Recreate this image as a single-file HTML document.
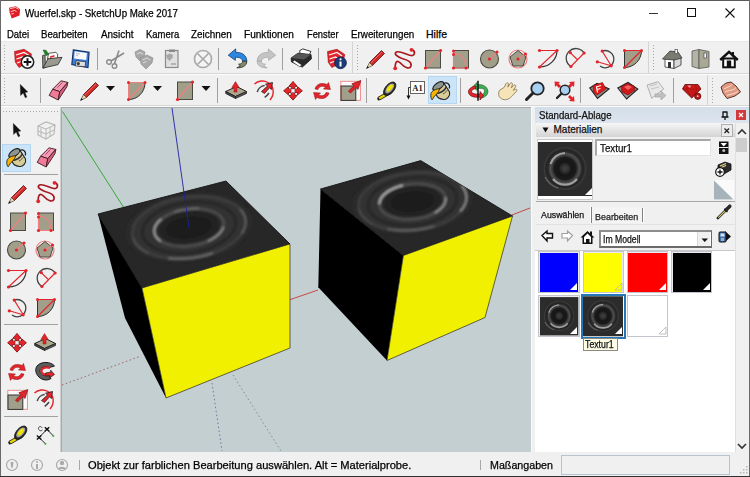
<!DOCTYPE html>
<html><head><meta charset="utf-8">
<style>
*{box-sizing:border-box;margin:0;padding:0}
html,body{width:750px;height:477px;overflow:hidden;background:#f0f0f0;font-family:"Liberation Sans",sans-serif;color:#000}
.a{position:absolute}
.t{position:absolute;white-space:nowrap;line-height:1;-webkit-text-stroke:0.25px currentColor}
svg{position:absolute;overflow:visible}
</style></head><body>
<div class="a" style="left:0;top:0;width:750px;height:25px;background:#fff"></div>
<div class="a" style="left:0;top:25px;width:750px;height:16px;background:#fff"></div>
<div class="a" style="left:0;top:41px;width:750px;height:1px;background:#e8e8e8"></div>
<div class="a" style="left:0;top:73px;width:750px;height:1px;background:#d6d6d6"></div>
<div class="a" style="left:0;top:74px;width:750px;height:1px;background:#fcfcfc"></div>
<div class="a" style="left:0;top:105px;width:750px;height:1px;background:#d6d6d6"></div>
<div class="a" style="left:0;top:106px;width:750px;height:1px;background:#fcfcfc"></div>
<!-- title -->
<svg width="12" height="13" style="left:9px;top:6px" viewBox="0 0 20 21"><path d="M0,2.5 L11.5,0 L18.5,5 L17.5,15.5 L4.5,20.5 L1,10 Z" fill="#e01c24"/><path d="M2,4 L11,2 L16,5 M3,9 L9.5,7 L12.5,9 M4,13 L8,12" stroke="#fbd0d0" stroke-width="1.6" fill="none"/></svg>
<div class="t" style="left:25px;top:8px;font-size:10.5px;color:#000;transform-origin:0 0;transform:scaleX(0.927)">Wuerfel.skp - SketchUp Make 2017</div>
<div class="a" style="left:649px;top:12.5px;width:9px;height:1.6px;background:#333"></div>
<div class="a" style="left:687px;top:8px;width:9px;height:9px;border:1px solid #111"></div>
<svg width="10" height="10" style="left:725px;top:8px"><path d="M0.5,0.5 L9.5,9.5 M9.5,0.5 L0.5,9.5" stroke="#111" stroke-width="1.1"/></svg>
<!-- menu -->
<div class="t" style="left:7px;top:29px;font-size:10.5px;color:#000;transform-origin:0 0;transform:scaleX(0.901)">Datei</div><div class="t" style="left:41px;top:29px;font-size:10.5px;color:#000;transform-origin:0 0;transform:scaleX(0.919)">Bearbeiten</div><div class="t" style="left:100.5px;top:29px;font-size:10.5px;color:#000;transform-origin:0 0;transform:scaleX(0.944)">Ansicht</div><div class="t" style="left:146px;top:29px;font-size:10.5px;color:#000;transform-origin:0 0;transform:scaleX(0.903)">Kamera</div><div class="t" style="left:191px;top:29px;font-size:10.5px;color:#000;transform-origin:0 0;transform:scaleX(0.942)">Zeichnen</div><div class="t" style="left:244.3px;top:29px;font-size:10.5px;color:#000;transform-origin:0 0;transform:scaleX(0.96)">Funktionen</div><div class="t" style="left:306.5px;top:29px;font-size:10.5px;color:#000;transform-origin:0 0;transform:scaleX(0.887)">Fenster</div><div class="t" style="left:350.5px;top:29px;font-size:10.5px;color:#000;transform-origin:0 0;transform:scaleX(0.935)">Erweiterungen</div><div class="t" style="left:426px;top:29px;font-size:10.5px;color:#000;transform-origin:0 0;transform:scaleX(1.0)">Hilfe</div>
<!-- selected paint bg -->
<div class="a" style="left:428px;top:76px;width:29px;height:28px;background:#cce4f7;border:1px solid #b4d8f4"></div>
<div class="a" style="left:2px;top:144px;width:29px;height:28px;background:#cce4f7;border:1px solid #b4d8f4"></div>
<div class="a" style="left:97px;top:48px;width:1px;height:22px;background:#a0a0a0"></div><div class="a" style="left:218px;top:48px;width:1px;height:22px;background:#a0a0a0"></div><div class="a" style="left:282px;top:48px;width:1px;height:22px;background:#a0a0a0"></div><div class="a" style="left:318px;top:48px;width:1px;height:22px;background:#a0a0a0"></div><div class="a" style="left:352px;top:42px;width:1px;height:31px;background:#d4d4d4"></div><div class="a" style="left:357px;top:45px;width:1px;height:27px;background:repeating-linear-gradient(#a8a8a8 0 1px,transparent 1px 3px)"></div><div class="a" style="left:648px;top:42px;width:1px;height:31px;background:#d4d4d4"></div><div class="a" style="left:653px;top:45px;width:1px;height:27px;background:repeating-linear-gradient(#a8a8a8 0 1px,transparent 1px 3px)"></div><div class="a" style="left:40px;top:78px;width:1px;height:25px;background:#a0a0a0"></div><div class="a" style="left:217px;top:78px;width:1px;height:25px;background:#a0a0a0"></div><div class="a" style="left:366px;top:78px;width:1px;height:25px;background:#a0a0a0"></div><div class="a" style="left:460px;top:78px;width:1px;height:25px;background:#a0a0a0"></div><div class="a" style="left:580px;top:78px;width:1px;height:25px;background:#a0a0a0"></div><div class="a" style="left:673px;top:78px;width:1px;height:25px;background:#a0a0a0"></div><div class="a" style="left:707px;top:75px;width:1px;height:30px;background:#d4d4d4"></div><div class="a" style="left:712px;top:78px;width:1px;height:26px;background:repeating-linear-gradient(#a8a8a8 0 1px,transparent 1px 3px)"></div><div class="a" style="left:4px;top:45px;width:1px;height:27px;background:repeating-linear-gradient(#a8a8a8 0 1px,transparent 1px 3px)"></div><div class="a" style="left:4px;top:78px;width:1px;height:26px;background:repeating-linear-gradient(#a8a8a8 0 1px,transparent 1px 3px)"></div><div class="a" style="left:4px;top:174px;width:54px;height:1px;background:#a0a0a0"></div><div class="a" style="left:4px;top:324px;width:54px;height:1px;background:#a0a0a0"></div><div class="a" style="left:4px;top:416px;width:54px;height:1px;background:#a0a0a0"></div><div class="a" style="left:3px;top:111px;width:56px;height:1px;background:repeating-linear-gradient(90deg,#a8a8a8 0 1px,transparent 1px 3px)"></div>
<svg width="750" height="477" style="left:0;top:0"><g transform="translate(14,49) scale(1.0)"><path d="M0.5,2.5 L10,0.3 L17.5,5 L16,12 L5,18.5 L1.3,13 Z" fill="#e3242b" stroke="#901010" stroke-width="0.6"/>
<path d="M2,6 L10,3.5 L15,6.5 M2.5,10 L8.5,8 L12,10 M3,14 L7,12.5" stroke="#fff" stroke-width="1.3" fill="none"/>
<circle cx="13.5" cy="13" r="6.2" fill="#fff" stroke="#222" stroke-width="1.5"/>
<path d="M13.5,9.2 V16.8 M9.7,13 H17.3" stroke="#111" stroke-width="2"/></g><g transform="translate(42,49) scale(1.0)"><path d="M0.5,6.5 L3,6 L3.5,18.5 L0.8,19.2 Z" fill="#8c8c84" stroke="#333" stroke-width="0.8"/>
<path d="M5.5,10 L6.5,4.3 L13.8,3.3 L15.6,5 L15.6,9.5 Z" fill="#fff" stroke="#333" stroke-width="0.8"/>
<path d="M8,8.3 L12.5,6.8" stroke="#e3242b" stroke-width="1.6"/>
<path d="M1.2,1 L4.2,1.5 L6.5,5.4 L3.8,6.6 Z" fill="#1a8a28" stroke="#0a4a14" stroke-width="0.6"/>
<path d="M1,19 L6,9.8 L20,8.3 L16,15.6 Z" fill="#9a9a90" stroke="#333" stroke-width="0.9"/></g><g transform="translate(71,49) scale(1.0)"><path d="M2.3,0.9 L18.1,3.3 L17,18.5 L0.8,15.6 Z" fill="#3a80d8" stroke="#10306a" stroke-width="1.1"/>
<path d="M3.7,2.2 L16,4.1 L15.2,10.9 L3.1,9.6 Z" fill="#fafafa"/>
<path d="M5,4.5 L9,5 M5,6.5 L7,6.8" stroke="#889" stroke-width="0.6"/>
<path d="M5.2,11.7 L14.7,12.7 L14.1,17.7 L4.2,16.9 Z" fill="#e0e0e0" stroke="#223" stroke-width="0.7"/>
<circle cx="7.3" cy="14.6" r="1.6" fill="#3a3a30"/></g><g transform="translate(106,49) scale(1.0)"><circle cx="3" cy="13" r="2.3" fill="none" stroke="#8a8a8a" stroke-width="1.4"/>
<circle cx="8.5" cy="17" r="2.3" fill="none" stroke="#8a8a8a" stroke-width="1.4"/>
<path d="M5,12 L18,4 M8.5,14.5 L13,1.5" stroke="#8a8a8a" stroke-width="1.6"/></g><g transform="translate(134,49) scale(1.0)"><path d="M1,3 L6,0.5 L11,3 L10,8 L6,12 L2,8 Z" fill="#a8a8a8" stroke="#8a8a8a" stroke-width="0.6"/>
<path d="M6,9 L13,6 L19,9 L18,14 L12,20 L7,15 Z" fill="#a8a8a8" stroke="#8a8a8a" stroke-width="0.6"/>
<path d="M3,5 L6,3.5 L9,5 M8.5,11 L13,9 L16,11 M9,14 L12.5,12.5" stroke="#ddd" stroke-width="1" fill="none"/></g><g transform="translate(162,49) scale(1.0)"><rect x="3.5" y="1.5" width="12.5" height="17" fill="#e0e0e0" stroke="#8a8a8a" stroke-width="1.2"/>
<rect x="7" y="0.5" width="6" height="2.5" fill="#8a8a8a"/>
<path d="M4,6 L8,4.5 L11,6 L10.5,9 L7.5,12 L5,9.5 Z" fill="#a8a8a8"/>
<path d="M9,15 H14" stroke="#8a8a8a" stroke-width="1"/></g><g transform="translate(193,49) scale(1.0)"><circle cx="10" cy="10" r="8.5" fill="#f4f4f4" stroke="#a8a8a8" stroke-width="1.6"/>
<path d="M4.5,4.5 L15.5,15.5 M15.5,4.5 L4.5,15.5" stroke="#a8a8a8" stroke-width="1.6"/></g><g transform="translate(228,49) scale(1.0)"><path d="M7.7,-0.1 L0.3,6.2 L7.3,11.3 L7.5,8.3 C11,8 14.3,9.3 14.6,12.2 L18.8,12.2 C18.6,6 14,3.3 7.8,3.4 Z" fill="#2a88e0" stroke="#103a70" stroke-width="0.8"/>
<path d="M14.6,12.2 C14.6,14.2 13,15.2 10.5,15.2 L12.5,17 L8.8,18.8 C13,19.2 18.9,17.5 18.8,12.2 Z" fill="#808a70" stroke="#2a3020" stroke-width="0.8"/></g><g transform="translate(256,49) scale(1.0)"><g transform="translate(20,0) scale(-1,1)"><path d="M7.7,-0.1 L0.3,6.2 L7.3,11.3 L7.5,8.3 C11,8 14.3,9.3 14.6,12.2 L18.8,12.2 C18.6,6 14,3.3 7.8,3.4 Z" fill="#c4c4c4" stroke="#a8a8a8" stroke-width="0.8"/>
<path d="M14.6,12.2 C14.6,14.2 13,15.2 10.5,15.2 L12.5,17 L8.8,18.8 C13,19.2 18.9,17.5 18.8,12.2 Z" fill="#c8c8c8" stroke="#a8a8a8" stroke-width="0.8"/></g></g><g transform="translate(291,49) scale(1.0)"><path d="M8.7,1.6 L11.8,-0.1 L20,2.5 L17.4,7.3 L9,5 Z" fill="#fff" stroke="#222" stroke-width="0.9"/>
<path d="M0.1,9 L7,4.2 L20,5.5 L20.4,9.9 L11.3,18.1 L0.5,12.9 Z" fill="#2a2a2a" stroke="#111" stroke-width="0.8"/>
<path d="M7,4.2 L20,5.5 L13,10.5 L0.1,9 Z" fill="#555"/>
<path d="M1.4,12.9 L3.5,11.2 L10.9,16 L8.7,17.7 Z" fill="#fff" stroke="#222" stroke-width="0.6"/></g><g transform="translate(326,49) scale(1.0)"><path d="M1.5,2.5 L11,0.3 L18.8,5.5 L17,13 L5.8,18.5 L2.3,13.3 Z" fill="#e3242b" stroke="#901010" stroke-width="0.6"/>
<path d="M3,6 L11,3.5 L16,7 M3.5,10 L9.5,8 L13,10.5 M4,14 L8,12.5" stroke="#fff" stroke-width="1.3" fill="none"/>
<circle cx="14.5" cy="13.8" r="5.9" fill="#1a3a78" stroke="#0d2250" stroke-width="0.8"/>
<rect x="13.5" y="12.5" width="2" height="5" fill="#fff"/><circle cx="14.5" cy="10.3" r="1.1" fill="#fff"/></g><g transform="translate(366,49) scale(1.0)"><path d="M3.5,13.5 L15.5,1.5 L18.5,4.5 L6.5,16.5 Z" fill="#d02a2a" stroke="#5a1010" stroke-width="0.8"/>
<path d="M3.5,13.5 L6.5,16.5 L0.5,19.5 Z" fill="#e8d8b0" stroke="#333" stroke-width="0.6"/>
<path d="M0.5,19.5 L1.5,17 L3,18.5 Z" fill="#111"/>
<path d="M5,14 L16,3" stroke="#f07070" stroke-width="0.8"/></g><g transform="translate(393,49) scale(1.0)"><path d="M18.5,0.5 C23,2 22,7 18,6.5 C14,6 7,1.5 3.5,3 C0,5 5,8 9,9.5 C14,11 19,12.5 18,17 C17,20.5 12,19 9,15.5 C7,13 4,11 2.8,14 C2,16 2.2,18 2.2,19.3" fill="none" stroke="#a81820" stroke-width="1.7"/>
<circle cx="18.5" cy="0.8" r="1.9" fill="#e3242b"/><circle cx="2.2" cy="19.3" r="1.9" fill="#e3242b"/></g><g transform="translate(424,49.5) scale(1.0)"><rect x="1.5" y="1" width="15" height="17.5" fill="#a19e8a" stroke="#4a4a42" stroke-width="1"/>
<path d="M1.5,18.5 L16.5,1" stroke="#f08080" stroke-width="1.2"/><circle cx="1.5" cy="18.5" r="1.6" fill="#e3242b"/><circle cx="16.5" cy="1" r="1.6" fill="#e3242b"/></g><g transform="translate(452,49.5) scale(1.0)"><rect x="1.5" y="1" width="15" height="17.5" fill="#a19e8a" stroke="#4a4a42" stroke-width="1"/>
<path d="M1.5,4 C9,4 14,10 14,18.5" fill="none" stroke="#f08080" stroke-width="1.2"/>
<path d="M1.5,1 V18.5 H16" fill="none" stroke="#f08080" stroke-width="1.2"/>
<circle cx="1.5" cy="1.5" r="1.5" fill="#e3242b"/><circle cx="1.5" cy="5" r="1.5" fill="#e3242b"/><circle cx="1.5" cy="18.5" r="1.6" fill="#e3242b"/><circle cx="14" cy="18.5" r="1.5" fill="#e3242b"/></g><g transform="translate(480,49) scale(1.0)"><circle cx="9.5" cy="10" r="9" fill="#a19e8a" stroke="#4a4a42" stroke-width="1.1"/>
<path d="M9.5,10 L17,3" stroke="#f08080" stroke-width="1.2"/><circle cx="9.5" cy="10" r="1.6" fill="#e3242b"/><circle cx="17" cy="3" r="1.6" fill="#e3242b"/></g><g transform="translate(508,49) scale(1.0)"><circle cx="10" cy="10" r="9" fill="none" stroke="#f08080" stroke-width="1.2"/>
<path d="M10,1.5 L18,8 L15,17 L5,17 L2,8 Z" fill="#a19e8a" stroke="#4a4a42" stroke-width="1"/>
<path d="M10,10 L17.5,5" stroke="#f08080" stroke-width="1.2"/><circle cx="10" cy="10" r="1.6" fill="#e3242b"/><circle cx="17.5" cy="5" r="1.6" fill="#e3242b"/></g><g transform="translate(538,49) scale(1.0)"><path d="M19,1.5 C19,10 12,18 1.5,18" fill="none" stroke="#333" stroke-width="1.2"/>
<path d="M1.5,1.5 H19 M1.5,18 L19,1.5" stroke="#e3242b" stroke-width="1.1"/>
<circle cx="1.5" cy="1.5" r="1.6" fill="#e3242b"/><circle cx="19" cy="1.5" r="1.6" fill="#e3242b"/><circle cx="1.5" cy="18" r="1.6" fill="#e3242b"/></g><g transform="translate(566,49) scale(1.0)"><path d="M18.1,4 A9.7,9.7 0 1 0 4.9,17.5" fill="none" stroke="#444" stroke-width="1.3"/>
<path d="M18.1,4 L4.9,17.5 M4.2,3.6 L11.5,10.75" stroke="#e3242b" stroke-width="1.1"/>
<circle cx="4.2" cy="3.6" r="1.6" fill="#e3242b"/><circle cx="18.1" cy="4" r="1.6" fill="#e3242b"/><circle cx="4.9" cy="17.5" r="1.6" fill="#e3242b"/></g><g transform="translate(596,49) scale(1.0)"><path d="M6.2,2.1 A8.6,8.6 0 1 1 4,17" fill="none" stroke="#444" stroke-width="1.3"/>
<path d="M6.2,2.1 L15.2,16.8 M1.3,12.8 L15.2,16.8" stroke="#e3242b" stroke-width="1.1"/>
<circle cx="6.2" cy="2.1" r="1.6" fill="#e3242b"/><circle cx="1.3" cy="12.8" r="1.6" fill="#e3242b"/><circle cx="15.2" cy="16.8" r="1.6" fill="#e3242b"/></g><g transform="translate(623,49) scale(1.0)"><path d="M1.5,18.5 L1.5,1.5 L18.5,1.5 C18.5,11 11,18.5 1.5,18.5 Z" fill="#a19e8a" stroke="#333" stroke-width="1"/>
<path d="M1.5,1.5 H18.5 M1.5,18.5 L18.5,1.5" stroke="#e3242b" stroke-width="1.1"/>
<circle cx="1.5" cy="1.5" r="1.5" fill="#e3242b"/><circle cx="18.5" cy="1.5" r="1.5" fill="#e3242b"/><circle cx="1.5" cy="18.5" r="1.5" fill="#e3242b"/></g><g transform="translate(662,49) scale(1.0)"><path d="M3,9 L3,18 L12,19.5 L12,10 Z" fill="#fff" stroke="#333" stroke-width="0.8"/>
<path d="M12,10 L12,19.5 L19,16 L19,8 Z" fill="#d8d8d8" stroke="#333" stroke-width="0.8"/>
<path d="M0.5,10 L8,2 L16,3 L20,9 L12,11 Z" fill="#7a7a70" stroke="#333" stroke-width="0.8"/>
<rect x="13" y="0.5" width="2.5" height="4" fill="#fff" stroke="#333" stroke-width="0.6"/>
<rect x="6" y="13" width="3" height="6" fill="#333"/></g><g transform="translate(691,49) scale(1.0)"><path d="M1,2 L8,0.5 L8,19.5 L1,17.5 Z" fill="#b4b4a4" stroke="#555" stroke-width="0.8"/>
<path d="M8,0.5 L18,2.5 L18,18 L8,19.5 Z" fill="#a8a894" stroke="#555" stroke-width="0.8"/>
<rect x="13" y="4" width="2.5" height="5" fill="#fff" stroke="#333" stroke-width="0.6"/></g><g transform="translate(719,49) scale(1.0)"><rect x="4.2" y="9.5" width="11.6" height="8.8" fill="#fff" stroke="#111" stroke-width="2"/>
<rect x="12.8" y="3" width="2.2" height="4.5" fill="#111"/>
<path d="M1.2,11 L10,2.8 L18.8,11" fill="none" stroke="#111" stroke-width="2.4"/>
<rect x="7.8" y="11.5" width="4.4" height="7" fill="#111"/></g><g transform="translate(20,84) scale(1.0)"><path d="M0.3,0.4 L0.6,11.5 L3.2,9 L5.3,13.8 L6.9,13 L4.9,8.4 L7.8,8 Z" fill="#111" stroke="#111" stroke-width="0.4"/></g><g transform="translate(48,81) scale(1.0)"><path d="M4.6,8.2 L13,-0.2 L19.8,1.4 L11.8,10.6 Z" fill="#f49ab4" stroke="#3a1a20" stroke-width="0.9"/>
<path d="M4.6,8.2 L11.8,10.6 L10.2,19 L1.2,14.4 Z" fill="#f07a98" stroke="#3a1a20" stroke-width="0.9"/>
<path d="M11.8,10.6 L19.8,1.4 L19,5.6 L10.2,19 Z" fill="#d8607c" stroke="#3a1a20" stroke-width="0.9"/>
<path d="M9.5,6.5 L14.5,1.5" stroke="#a04060" stroke-width="0.9"/></g><g transform="translate(80,81) scale(1.0)"><path d="M3.5,13.5 L15.5,1.5 L18.5,4.5 L6.5,16.5 Z" fill="#d02a2a" stroke="#5a1010" stroke-width="0.8"/>
<path d="M3.5,13.5 L6.5,16.5 L0.5,19.5 Z" fill="#e8d8b0" stroke="#333" stroke-width="0.6"/>
<path d="M0.5,19.5 L1.5,17 L3,18.5 Z" fill="#111"/>
<path d="M5,14 L16,3" stroke="#f07070" stroke-width="0.8"/></g><g transform="translate(106,86) scale(1.0)"><path d="M0,0 L9,0 L4.5,5 Z" fill="#111"/></g><g transform="translate(127,81) scale(1.0)"><path d="M1.5,1.5 L18,1.5 C18,11 11,18.5 1.5,18.5 Z" fill="#a19e8a" stroke="#333" stroke-width="1"/>
<path d="M1.5,1.5 V18.5" stroke="#f08080" stroke-width="1"/>
<path d="M1.5,1.5 H18 M1.5,18.5 L18,1.5" stroke="#f08080" stroke-width="1.1"/>
<circle cx="1.5" cy="1.5" r="1.5" fill="#e3242b"/><circle cx="18" cy="1.5" r="1.5" fill="#e3242b"/><circle cx="1.5" cy="18.5" r="1.5" fill="#e3242b"/></g><g transform="translate(153,86) scale(1.0)"><path d="M0,0 L9,0 L4.5,5 Z" fill="#111"/></g><g transform="translate(176,81) scale(1.0)"><rect x="1.5" y="1" width="15" height="17.5" fill="#a19e8a" stroke="#4a4a42" stroke-width="1"/>
<path d="M1.5,18.5 L16.5,1" stroke="#f08080" stroke-width="1.2"/><circle cx="1.5" cy="18.5" r="1.6" fill="#e3242b"/><circle cx="16.5" cy="1" r="1.6" fill="#e3242b"/></g><g transform="translate(201.5,86) scale(1.0)"><path d="M0,0 L9,0 L4.5,5 Z" fill="#111"/></g><g transform="translate(226,81) scale(1.0)"><path d="M-0.3,10.5 L10.5,5.5 L20.5,10.5 L9.5,15.5 Z" fill="#aba88f" stroke="#222" stroke-width="1"/>
<path d="M-0.3,10.5 L9.5,15.5 L9.5,17.5 L-0.3,12.5 Z" fill="#444" stroke="#222" stroke-width="0.8"/>
<path d="M9.5,15.5 L20.5,10.5 L20.5,12.5 L9.5,17.5 Z" fill="#5a5a5a" stroke="#222" stroke-width="0.8"/>
<path d="M8,11 L8,6.5 L5.8,6.5 L9.5,0.6 L13.2,6.5 L11,6.5 L11,11 Z" fill="#e3242b" stroke="#901010" stroke-width="0.5"/></g><g transform="translate(255,81) scale(1.0)"><path d="M-0.5,3 C3,-0.5 9,-1 13,1.5 C19,5 20,13 15,19" fill="none" stroke="#e3242b" stroke-width="1.4"/>
<path d="M2.2,11 C3,8 6,5 9.7,4.6" fill="none" stroke="#444" stroke-width="1.5"/>
<path d="M9.7,16.3 C11.5,15 13,13.5 14,12" fill="none" stroke="#444" stroke-width="1.5"/>
<path d="M6.5,10.5 L12.5,5 L10.5,3.2 L17.5,1.5 L16.5,8.5 L14.5,6.8 L9.5,12.5 Z" fill="#e3242b" stroke="#222" stroke-width="0.8"/></g><g transform="translate(283,81) scale(1.0)"><path d="M10.00,0.50 L14.00,5.20 L11.70,5.20 L11.70,7.60 L8.30,7.60 L8.30,5.20 L6.00,5.20 Z M19.30,9.80 L14.60,13.80 L14.60,11.50 L12.20,11.50 L12.20,8.10 L14.60,8.10 L14.60,5.80 Z M10.00,19.10 L6.00,14.40 L8.30,14.40 L8.30,12.00 L11.70,12.00 L11.70,14.40 L14.00,14.40 Z M0.70,9.80 L5.40,5.80 L5.40,8.10 L7.80,8.10 L7.80,11.50 L5.40,11.50 L5.40,13.80 Z" fill="#e3242b" stroke="#3a0808" stroke-width="0.9" stroke-linejoin="round"/>
<path d="M10.00,0.50 L14.00,5.20 L11.70,5.20 L11.70,7.60 L8.30,7.60 L8.30,5.20 L6.00,5.20 Z M19.30,9.80 L14.60,13.80 L14.60,11.50 L12.20,11.50 L12.20,8.10 L14.60,8.10 L14.60,5.80 Z M10.00,19.10 L6.00,14.40 L8.30,14.40 L8.30,12.00 L11.70,12.00 L11.70,14.40 L14.00,14.40 Z M0.70,9.80 L5.40,5.80 L5.40,8.10 L7.80,8.10 L7.80,11.50 L5.40,11.50 L5.40,13.80 Z" fill="#e3242b"/></g><g transform="translate(312,81) scale(1.0)"><path d="M3,8 C4,3 10,1 15,3.5 L16.5,1.5 L18.5,8.5 L11.5,8 L13.5,6 C10,4.5 7,5.5 6,8.5 Z" fill="#e3242b" stroke="#901010" stroke-width="0.5"/>
<path d="M17,12 C16,17 10,19 5,16.5 L3.5,18.5 L1.5,11.5 L8.5,12 L6.5,14 C10,15.5 13,14.5 14,11.5 Z" fill="#e3242b" stroke="#901010" stroke-width="0.5"/></g><g transform="translate(341,81) scale(1.0)"><rect x="-0.2" y="0.3" width="19.6" height="19" fill="#fafafa" stroke="#f08080" stroke-width="0.9"/>
<rect x="0" y="5" width="14.8" height="14.4" fill="#a19e8a" stroke="#333" stroke-width="1"/>
<path d="M7.5,10 L13,4.8 L10.8,2.8 L19.8,-0.4 L17,8.4 L15,6.6 L9.5,12 Z" fill="#e3242b" stroke="#801010" stroke-width="0.7"/></g><g transform="translate(377,81) scale(1.0)"><path d="M9.5,11.5 L1,16.3 L2.6,19 L10.5,14.5 Z" fill="#e8d800" stroke="#222" stroke-width="0.9"/>
<path d="M1,16.3 L2.6,19 L1,19.6 L0.2,17.5 Z" fill="#111"/>
<g transform="rotate(-50 12.7 7.8)"><ellipse cx="12.7" cy="7.8" rx="8" ry="4.4" fill="#2a2a2a" stroke="#111" stroke-width="0.8"/>
<ellipse cx="13" cy="7.6" rx="6" ry="3" fill="#a0a0a0"/><ellipse cx="13.3" cy="7.4" rx="4.2" ry="2" fill="#f0e400"/></g></g><g transform="translate(405,81) scale(1.0)"><rect x="5.5" y="0.5" width="14" height="12" fill="#fff" stroke="#555" stroke-width="0.9"/>
<text x="7.3" y="10" font-family="Liberation Serif" font-weight="bold" font-size="8.5" fill="#222">A1</text>
<path d="M5.5,6.5 L3.5,6.5 L3.5,15" stroke="#333" stroke-width="1" fill="none"/>
<path d="M1.5,14.5 L5.5,14.5 L3.5,18.5 Z" fill="#111"/></g><g transform="translate(431,81) scale(1.0)"><path d="M2,8 C4,3 10,0.5 13,2.5 L18.5,11 C19.5,15 16,19 12.5,18.5 C9,18 6,16 5.5,14 Z" fill="#d8cc98" stroke="#222" stroke-width="1.1"/>
<path d="M5,12.5 C9,12.5 14,9.5 15.5,5.5" fill="none" stroke="#333" stroke-width="1.6"/>
<path d="M12,13 C14,12 16,10 17,8" fill="none" stroke="#555" stroke-width="1"/>
<ellipse cx="7.3" cy="5" rx="6.3" ry="3.1" transform="rotate(-35 7.3 5)" fill="#8c9692" stroke="#222" stroke-width="1.1"/>
<path d="M12.5,2.5 C16,0.5 19.5,3.5 18.3,7.5" fill="none" stroke="#222" stroke-width="1.2"/>
<path d="M8.6,7.6 C5,8 0.8,9.5 0,12.5 C-0.5,15 0,18 1.1,18.8 C2.5,17 3.5,14.5 5.4,13.3 C7,12 8.2,10 8.6,7.6 Z" fill="#f4b400" stroke="#222" stroke-width="0.9"/></g><g transform="translate(468,81) scale(1.0)"><path d="M10,7.5 C15,6.5 17.5,8.5 16.5,11 C16,12.5 15,13.5 13.5,14 L13.5,17 C18,16 21,12.5 19.5,8.5 C18,4.5 13,3 9,4 L9,1.5 L5,5.5 L9,9.5 Z" fill="#3cb050" stroke="#1a5a28" stroke-width="0.7"/>
<path d="M8,5 C3,5.5 0,8.5 0.5,11.5 C1,15 6,17 12,16 L12,19 L15.5,14.5 L12,10.5 L12,13 C7,13.5 3.5,12.5 3.5,10.5 C3.5,9 5.5,7.8 8,7.5 Z" fill="#e3242b" stroke="#701010" stroke-width="0.7"/>
<path d="M10,-0.2 V19.8" stroke="#111" stroke-width="1.5"/></g><g transform="translate(497,81) scale(1.0)"><g transform="rotate(12 10 10) translate(0.5,0)"><path d="M2,11 L6,7 L7,3 C7.5,1.5 9,1.5 9.5,3 L9.5,6 L11,2 C11.5,0.5 13.5,0.8 13.5,2.5 L13,6 L15,3 C15.5,1.8 17.5,2.3 17,4 L15.5,8 L17.5,6.5 C18.5,6 19.5,7 19,8 L16,13 C14,17 11,19.5 7,19 C3,18.5 1,15 2,11 Z" fill="#f4e4b8" stroke="#8a7a50" stroke-width="0.8"/></g></g><g transform="translate(525,81) scale(1.0)"><circle cx="12.5" cy="7.5" r="6.2" fill="#a8d0f0" stroke="#222" stroke-width="1.8"/>
<path d="M8,12 L1.5,18.5" stroke="#222" stroke-width="3" stroke-linecap="round"/></g><g transform="translate(554,81) scale(1.0)"><circle cx="11" cy="9" r="4.8" fill="#a8d0f0" stroke="#222" stroke-width="1.5"/>
<path d="M7.5,12.5 L3,17" stroke="#222" stroke-width="2.4" stroke-linecap="round"/>
<path d="M0.5,0.5 L6,1 L4.5,2.5 L7,5 L5,7 L2.5,4.5 L1,6 Z M20.5,0.5 L15,1 L16.5,2.5 L14,5 L16,7 L18.5,4.5 L20,6 Z M20.5,20.5 L15,20 L16.5,18.5 L14,16 L16,14 L18.5,16.5 L20,15 Z" fill="#e3242b"/></g><g transform="translate(589,81) scale(1.0)"><path d="M0.8,7 L8,2.5 L20,8 L8.5,17.5 Z" fill="#8a8a8a" stroke="#222" stroke-width="1.2"/>
<path d="M4,4.5 L13.5,1.5 L17,8 L8,14 L4.5,11 Z" fill="#e01818" stroke="#801010" stroke-width="0.6"/>
<path d="M7,6 L12,4.5 M7.5,6 L8.5,11.5 M8,8.5 L11.5,7.5" stroke="#fff" stroke-width="1.2"/></g><g transform="translate(618,81) scale(1.0)"><path d="M-0.2,7 L10,1.5 L19.8,8 L8.6,18 Z" fill="#9a9a9a" stroke="#222" stroke-width="1.1"/>
<path d="M3,6 L9,2.5 L16,5 L17,9 L10,14 L4,11 Z" fill="#d01818" stroke="#701010" stroke-width="0.7"/>
<path d="M6,6 L10,4 L14,6 L10,9 Z" fill="#f06060"/></g><g transform="translate(647,81) scale(1.0)"><path d="M0,4 L11.3,0.7 L16.7,8 L4.7,17.3 Z" fill="#e8e8e8" stroke="#b0b0b0" stroke-width="1"/>
<path d="M3,5 L10,3 M4,8 L12,6" stroke="#c0c0c0" stroke-width="0.9" fill="none"/>
<path d="M8,13 L14,13 L14,10 L19,14.5 L14,19 L14,16 L8,16 Z" fill="#c0c0c0" stroke="#a0a0a0" stroke-width="0.6"/></g><g transform="translate(682,81) scale(1.0)"><path d="M3,3.5 L16,3.5 L19,8 L9.7,17 L0.5,8 Z" fill="#c81818" stroke="#600808" stroke-width="0.8"/>
<path d="M0.5,8 H19 M6,3.5 L4.5,8 L9.7,17 M13,3.5 L15,8 L9.7,17" stroke="#901010" stroke-width="0.5" fill="none"/>
<path d="M5,4.5 L9,4.5 L8,7 Z" fill="#f8a0a0"/>
<circle cx="15.7" cy="15.2" r="3.2" fill="#b81818" stroke="#600808" stroke-width="0.7"/><circle cx="15.7" cy="15.2" r="0.9" fill="#f8c0c0"/></g><g transform="translate(721,81) scale(1.0)"><path d="M0,6 L5,2 L10,1 L15,5 L19.5,11 L14,15 L6,17.5 L2,12 Z" fill="#e09880" stroke="#4a2820" stroke-width="0.9"/>
<path d="M3,8 C6,6 9,6 11,3.5 M4,11 C8,9 12,10 15,6.5 M6,14.5 C10,13 13,13 17,10.5" stroke="#f8e0d0" stroke-width="1" fill="none"/></g><g transform="translate(13,123) scale(1.0)"><path d="M0.3,0.4 L0.6,11.5 L3.2,9 L5.3,13.8 L6.9,13 L4.9,8.4 L7.8,8 Z" fill="#111" stroke="#111" stroke-width="0.4"/></g><g transform="translate(36,120) scale(1.0)"><path d="M2,6 L10,2 L19,5 L18,14 L10,19 L2,15 Z" fill="none" stroke="#b8b8b8" stroke-width="1.2"/>
<path d="M2,6 L10,9 L19,5 M10,9 L10,19 M5,7.5 L5,16 M14,7 L14,16.5 M2,11 L10,14 L18,10" stroke="#b8b8b8" stroke-width="1" fill="none"/></g><g transform="translate(7,148) scale(1.0)"><path d="M2,8 C4,3 10,0.5 13,2.5 L18.5,11 C19.5,15 16,19 12.5,18.5 C9,18 6,16 5.5,14 Z" fill="#d8cc98" stroke="#222" stroke-width="1.1"/>
<path d="M5,12.5 C9,12.5 14,9.5 15.5,5.5" fill="none" stroke="#333" stroke-width="1.6"/>
<path d="M12,13 C14,12 16,10 17,8" fill="none" stroke="#555" stroke-width="1"/>
<ellipse cx="7.3" cy="5" rx="6.3" ry="3.1" transform="rotate(-35 7.3 5)" fill="#8c9692" stroke="#222" stroke-width="1.1"/>
<path d="M12.5,2.5 C16,0.5 19.5,3.5 18.3,7.5" fill="none" stroke="#222" stroke-width="1.2"/>
<path d="M8.6,7.6 C5,8 0.8,9.5 0,12.5 C-0.5,15 0,18 1.1,18.8 C2.5,17 3.5,14.5 5.4,13.3 C7,12 8.2,10 8.6,7.6 Z" fill="#f4b400" stroke="#222" stroke-width="0.9"/></g><g transform="translate(36,148) scale(1.0)"><path d="M4.6,8.2 L13,-0.2 L19.8,1.4 L11.8,10.6 Z" fill="#f49ab4" stroke="#3a1a20" stroke-width="0.9"/>
<path d="M4.6,8.2 L11.8,10.6 L10.2,19 L1.2,14.4 Z" fill="#f07a98" stroke="#3a1a20" stroke-width="0.9"/>
<path d="M11.8,10.6 L19.8,1.4 L19,5.6 L10.2,19 Z" fill="#d8607c" stroke="#3a1a20" stroke-width="0.9"/>
<path d="M9.5,6.5 L14.5,1.5" stroke="#a04060" stroke-width="0.9"/></g><g transform="translate(8,184) scale(1.0)"><path d="M3.5,13.5 L15.5,1.5 L18.5,4.5 L6.5,16.5 Z" fill="#d02a2a" stroke="#5a1010" stroke-width="0.8"/>
<path d="M3.5,13.5 L6.5,16.5 L0.5,19.5 Z" fill="#e8d8b0" stroke="#333" stroke-width="0.6"/>
<path d="M0.5,19.5 L1.5,17 L3,18.5 Z" fill="#111"/>
<path d="M5,14 L16,3" stroke="#f07070" stroke-width="0.8"/></g><g transform="translate(36,182) scale(1.0)"><path d="M18.5,0.5 C23,2 22,7 18,6.5 C14,6 7,1.5 3.5,3 C0,5 5,8 9,9.5 C14,11 19,12.5 18,17 C17,20.5 12,19 9,15.5 C7,13 4,11 2.8,14 C2,16 2.2,18 2.2,19.3" fill="none" stroke="#a81820" stroke-width="1.7"/>
<circle cx="18.5" cy="0.8" r="1.9" fill="#e3242b"/><circle cx="2.2" cy="19.3" r="1.9" fill="#e3242b"/></g><g transform="translate(9,212) scale(1.0)"><rect x="1.5" y="1" width="15" height="17.5" fill="#a19e8a" stroke="#4a4a42" stroke-width="1"/>
<path d="M1.5,18.5 L16.5,1" stroke="#f08080" stroke-width="1.2"/><circle cx="1.5" cy="18.5" r="1.6" fill="#e3242b"/><circle cx="16.5" cy="1" r="1.6" fill="#e3242b"/></g><g transform="translate(37,212) scale(1.0)"><rect x="1.5" y="1" width="15" height="17.5" fill="#a19e8a" stroke="#4a4a42" stroke-width="1"/>
<path d="M1.5,4 C9,4 14,10 14,18.5" fill="none" stroke="#f08080" stroke-width="1.2"/>
<path d="M1.5,1 V18.5 H16" fill="none" stroke="#f08080" stroke-width="1.2"/>
<circle cx="1.5" cy="1.5" r="1.5" fill="#e3242b"/><circle cx="1.5" cy="5" r="1.5" fill="#e3242b"/><circle cx="1.5" cy="18.5" r="1.6" fill="#e3242b"/><circle cx="14" cy="18.5" r="1.5" fill="#e3242b"/></g><g transform="translate(7,240) scale(1.0)"><circle cx="9.5" cy="10" r="9" fill="#a19e8a" stroke="#4a4a42" stroke-width="1.1"/>
<path d="M9.5,10 L17,3" stroke="#f08080" stroke-width="1.2"/><circle cx="9.5" cy="10" r="1.6" fill="#e3242b"/><circle cx="17" cy="3" r="1.6" fill="#e3242b"/></g><g transform="translate(35,240) scale(1.0)"><circle cx="10" cy="10" r="9" fill="none" stroke="#f08080" stroke-width="1.2"/>
<path d="M10,1.5 L18,8 L15,17 L5,17 L2,8 Z" fill="#a19e8a" stroke="#4a4a42" stroke-width="1"/>
<path d="M10,10 L17.5,5" stroke="#f08080" stroke-width="1.2"/><circle cx="10" cy="10" r="1.6" fill="#e3242b"/><circle cx="17.5" cy="5" r="1.6" fill="#e3242b"/></g><g transform="translate(7,269) scale(1.0)"><path d="M19,1.5 C19,10 12,18 1.5,18" fill="none" stroke="#333" stroke-width="1.2"/>
<path d="M1.5,1.5 H19 M1.5,18 L19,1.5" stroke="#e3242b" stroke-width="1.1"/>
<circle cx="1.5" cy="1.5" r="1.6" fill="#e3242b"/><circle cx="19" cy="1.5" r="1.6" fill="#e3242b"/><circle cx="1.5" cy="18" r="1.6" fill="#e3242b"/></g><g transform="translate(37,269) scale(1.0)"><path d="M18.1,4 A9.7,9.7 0 1 0 4.9,17.5" fill="none" stroke="#444" stroke-width="1.3"/>
<path d="M18.1,4 L4.9,17.5 M4.2,3.6 L11.5,10.75" stroke="#e3242b" stroke-width="1.1"/>
<circle cx="4.2" cy="3.6" r="1.6" fill="#e3242b"/><circle cx="18.1" cy="4" r="1.6" fill="#e3242b"/><circle cx="4.9" cy="17.5" r="1.6" fill="#e3242b"/></g><g transform="translate(8,298) scale(1.0)"><path d="M6.2,2.1 A8.6,8.6 0 1 1 4,17" fill="none" stroke="#444" stroke-width="1.3"/>
<path d="M6.2,2.1 L15.2,16.8 M1.3,12.8 L15.2,16.8" stroke="#e3242b" stroke-width="1.1"/>
<circle cx="6.2" cy="2.1" r="1.6" fill="#e3242b"/><circle cx="1.3" cy="12.8" r="1.6" fill="#e3242b"/><circle cx="15.2" cy="16.8" r="1.6" fill="#e3242b"/></g><g transform="translate(36,298) scale(1.0)"><path d="M1.5,18.5 L1.5,1.5 L18.5,1.5 C18.5,11 11,18.5 1.5,18.5 Z" fill="#a19e8a" stroke="#333" stroke-width="1"/>
<path d="M1.5,1.5 H18.5 M1.5,18.5 L18.5,1.5" stroke="#e3242b" stroke-width="1.1"/>
<circle cx="1.5" cy="1.5" r="1.5" fill="#e3242b"/><circle cx="18.5" cy="1.5" r="1.5" fill="#e3242b"/><circle cx="1.5" cy="18.5" r="1.5" fill="#e3242b"/></g><g transform="translate(7,333) scale(1.0)"><path d="M10.00,0.50 L14.00,5.20 L11.70,5.20 L11.70,7.60 L8.30,7.60 L8.30,5.20 L6.00,5.20 Z M19.30,9.80 L14.60,13.80 L14.60,11.50 L12.20,11.50 L12.20,8.10 L14.60,8.10 L14.60,5.80 Z M10.00,19.10 L6.00,14.40 L8.30,14.40 L8.30,12.00 L11.70,12.00 L11.70,14.40 L14.00,14.40 Z M0.70,9.80 L5.40,5.80 L5.40,8.10 L7.80,8.10 L7.80,11.50 L5.40,11.50 L5.40,13.80 Z" fill="#e3242b" stroke="#3a0808" stroke-width="0.9" stroke-linejoin="round"/>
<path d="M10.00,0.50 L14.00,5.20 L11.70,5.20 L11.70,7.60 L8.30,7.60 L8.30,5.20 L6.00,5.20 Z M19.30,9.80 L14.60,13.80 L14.60,11.50 L12.20,11.50 L12.20,8.10 L14.60,8.10 L14.60,5.80 Z M10.00,19.10 L6.00,14.40 L8.30,14.40 L8.30,12.00 L11.70,12.00 L11.70,14.40 L14.00,14.40 Z M0.70,9.80 L5.40,5.80 L5.40,8.10 L7.80,8.10 L7.80,11.50 L5.40,11.50 L5.40,13.80 Z" fill="#e3242b"/></g><g transform="translate(35,333) scale(1.0)"><path d="M-0.3,10.5 L10.5,5.5 L20.5,10.5 L9.5,15.5 Z" fill="#aba88f" stroke="#222" stroke-width="1"/>
<path d="M-0.3,10.5 L9.5,15.5 L9.5,17.5 L-0.3,12.5 Z" fill="#444" stroke="#222" stroke-width="0.8"/>
<path d="M9.5,15.5 L20.5,10.5 L20.5,12.5 L9.5,17.5 Z" fill="#5a5a5a" stroke="#222" stroke-width="0.8"/>
<path d="M8,11 L8,6.5 L5.8,6.5 L9.5,0.6 L13.2,6.5 L11,6.5 L11,11 Z" fill="#e3242b" stroke="#901010" stroke-width="0.5"/></g><g transform="translate(7,362) scale(1.0)"><path d="M3,8 C4,3 10,1 15,3.5 L16.5,1.5 L18.5,8.5 L11.5,8 L13.5,6 C10,4.5 7,5.5 6,8.5 Z" fill="#e3242b" stroke="#901010" stroke-width="0.5"/>
<path d="M17,12 C16,17 10,19 5,16.5 L3.5,18.5 L1.5,11.5 L8.5,12 L6.5,14 C10,15.5 13,14.5 14,11.5 Z" fill="#e3242b" stroke="#901010" stroke-width="0.5"/></g><g transform="translate(35,362) scale(1.0)"><path d="M19.5,4 C16,-0.5 6,-1 2,4 C-1,8.5 1.5,15 8,17.5 C11,18.5 14,18 16,16.5 L13.5,13.5 C9.5,14.5 5,12.5 5,9 C5,5.5 10,3.5 14.5,5.5 Z" fill="#5c5c5c" stroke="#1a1a1a" stroke-width="1"/>
<path d="M15,6 C10,4.5 6,6.5 6.5,9.5 C7,12 10,13 12.5,12.5" fill="none" stroke="#e3242b" stroke-width="2.2"/>
<path d="M10.5,11 L16,10 L15.5,8 L19.5,12.5 L14.5,16 L15,13.5 L11,14 Z" fill="#e3242b" stroke="#222" stroke-width="0.7"/></g><g transform="translate(8,390) scale(1.0)"><rect x="-0.2" y="0.3" width="19.6" height="19" fill="#fafafa" stroke="#f08080" stroke-width="0.9"/>
<rect x="0" y="5" width="14.8" height="14.4" fill="#a19e8a" stroke="#333" stroke-width="1"/>
<path d="M7.5,10 L13,4.8 L10.8,2.8 L19.8,-0.4 L17,8.4 L15,6.6 L9.5,12 Z" fill="#e3242b" stroke="#801010" stroke-width="0.7"/></g><g transform="translate(35,390) scale(1.0)"><path d="M-0.5,3 C3,-0.5 9,-1 13,1.5 C19,5 20,13 15,19" fill="none" stroke="#e3242b" stroke-width="1.4"/>
<path d="M2.2,11 C3,8 6,5 9.7,4.6" fill="none" stroke="#444" stroke-width="1.5"/>
<path d="M9.7,16.3 C11.5,15 13,13.5 14,12" fill="none" stroke="#444" stroke-width="1.5"/>
<path d="M6.5,10.5 L12.5,5 L10.5,3.2 L17.5,1.5 L16.5,8.5 L14.5,6.8 L9.5,12.5 Z" fill="#e3242b" stroke="#222" stroke-width="0.8"/></g><g transform="translate(8,425) scale(1.0)"><path d="M9.5,11.5 L1,16.3 L2.6,19 L10.5,14.5 Z" fill="#e8d800" stroke="#222" stroke-width="0.9"/>
<path d="M1,16.3 L2.6,19 L1,19.6 L0.2,17.5 Z" fill="#111"/>
<g transform="rotate(-50 12.7 7.8)"><ellipse cx="12.7" cy="7.8" rx="8" ry="4.4" fill="#2a2a2a" stroke="#111" stroke-width="0.8"/>
<ellipse cx="13" cy="7.6" rx="6" ry="3" fill="#a0a0a0"/><ellipse cx="13.3" cy="7.4" rx="4.2" ry="2" fill="#f0e400"/></g></g><g transform="translate(35,424) scale(1.0)"><path d="M12,5.3 L4.1,13.5 M12,5.3 L18.3,11.9 M4.1,13.5 L10.4,19.8" stroke="#222" stroke-width="1" fill="none"/>
<path d="M9.8,3.3 L14.2,7.3 M14.2,3.3 L9.8,7.3 M1.9,11.5 L6.3,15.5 M6.3,11.5 L1.9,15.5" stroke="#111" stroke-width="1.5"/>
<circle cx="18.3" cy="11.9" r="1.1" fill="#50b050"/><circle cx="10.4" cy="19.8" r="1.1" fill="#50b050"/>
<path d="M7,4 C6.5,2 3.5,2 3.5,4.5 C3.5,6.5 6,7.5 7.5,6" fill="none" stroke="#333" stroke-width="0.9"/></g></svg>
<!-- left toolbar border -->
<div class="a" style="left:60px;top:107px;width:1px;height:345px;background:#d0d0d0"></div>
<!-- viewport -->
<div class="a" style="left:61px;top:107px;width:471px;height:346px;background:#fafafa"></div>
<div class="a" style="left:61px;top:107px;width:470px;height:345px;background:#a8a8a8"></div>
<div class="a" style="left:62px;top:108px;width:469px;height:344px;background:#c4cfd1;overflow:hidden">
<svg width="469" height="344" style="left:0;top:0" viewBox="62 108 469 344">
<defs>
<filter id="bl" x="-10%" y="-10%" width="120%" height="120%"><feGaussianBlur stdDeviation="0.9"/></filter>
<clipPath id="top1"><polygon points="98,214 226,181 290,244 142,288"/></clipPath>
<clipPath id="top2"><polygon points="320.5,189 420.7,160.6 512.5,216 403.4,255.5"/></clipPath>
<radialGradient id="fg1" cx="0.5" cy="0.5" r="0.5"><stop offset="0" stop-color="#303030"/><stop offset="0.8" stop-color="#2e2e2e"/><stop offset="1" stop-color="#2b2b2b"/></radialGradient>
<radialGradient id="fg2" cx="0.5" cy="0.5" r="0.5"><stop offset="0" stop-color="#303030"/><stop offset="1" stop-color="#292929"/></radialGradient>
</defs>
<!-- axes -->
<line x1="62.5" y1="111.5" x2="124" y2="208" stroke="#38a838" stroke-width="1"/>
<line x1="62" y1="385" x2="141" y2="356" stroke="#a06060" stroke-width="1" stroke-dasharray="1.5,2.5"/>
<line x1="212" y1="383" x2="222" y2="451" stroke="#6a78a0" stroke-width="1" stroke-dasharray="1.5,2.5"/>
<line x1="233" y1="375" x2="281" y2="451" stroke="#709880" stroke-width="1" stroke-dasharray="1.5,2.5"/>
<line x1="289" y1="300" x2="318" y2="290" stroke="#c84848" stroke-width="1"/>
<line x1="512" y1="215" x2="530" y2="208" stroke="#c84848" stroke-width="1"/>
<!-- cube 1 -->
<polygon points="98,214 142,288 166,398 125,318" fill="#000"/>
<polygon points="98,214 226,181 290,244 142,288" fill="#272727" stroke="#151515" stroke-width="0.9"/>
<g clip-path="url(#top1)"><g filter="url(#bl)">
<ellipse cx="189" cy="227.5" rx="64.0" ry="34.0" transform="rotate(-8 189 227.5)" fill="url(#fg1)"/>
<ellipse cx="189" cy="227.5" rx="57.0" ry="30.5" transform="rotate(-8 189 227.5)" fill="#303030" stroke="#3c3c3c" stroke-width="3"/>
<ellipse cx="189" cy="227.5" rx="47.0" ry="25.0" transform="rotate(-8 189 227.5)" fill="none" stroke="#272727" stroke-width="2.5"/>
<ellipse cx="189" cy="227.5" rx="35.0" ry="18.5" transform="rotate(-8 189 227.5)" fill="#2a2a2a" stroke="#4c4c4c" stroke-width="3"/>
<ellipse cx="189" cy="227.5" rx="30.0" ry="15.5" transform="rotate(-8 189 227.5)" fill="#222"/>
<ellipse cx="189" cy="227.5" rx="24.5" ry="12.2" transform="rotate(-8 189 227.5)" fill="#1c1c1c" stroke="#262626" stroke-width="1.5"/>
<path d="M160.27,240.88 L159.31,240.18 L158.43,239.44 L157.63,238.68 L156.91,237.89 L156.27,237.07 L155.72,236.22 L155.25,235.35 L154.87,234.46 L154.58,233.56 L154.38,232.64 L154.27,231.70 L154.25,230.76 L154.32,229.80 L154.47,228.84 L154.72,227.88 L155.06,226.91 L155.48,225.95 L155.99,224.99 L156.59,224.04 L157.27,223.09 L158.03,222.16 L158.88,221.24 L159.80,220.34 L160.79,219.46" fill="none" stroke="#a0a0a0" stroke-width="1.8" stroke-linecap="round"/>
<path d="M174.73,211.95 L175.65,211.64 L176.59,211.35 L177.54,211.07 L178.50,210.80 L179.47,210.54 L180.45,210.30 L181.43,210.08 L182.42,209.87 L183.41,209.67 L184.41,209.49 L185.42,209.33 L186.43,209.18 L187.43,209.05 L188.44,208.93 L189.46,208.83 L190.47,208.74 L191.48,208.67 L192.48,208.61 L193.49,208.57 L194.49,208.55 L195.48,208.54 L196.47,208.55 L197.46,208.58 L198.43,208.62" fill="none" stroke="#707070" stroke-width="1.5" stroke-linecap="round"/>
<path d="M223.14,227.54 L222.91,228.16 L222.65,228.78 L222.34,229.39 L222.01,230.01 L221.63,230.62 L221.22,231.23 L220.78,231.84 L220.30,232.44 L219.79,233.04 L219.25,233.63 L218.67,234.21 L218.06,234.79 L217.43,235.36 L216.76,235.92 L216.06,236.47 L215.33,237.01 L214.57,237.54 L213.79,238.06 L212.98,238.57 L212.14,239.07 L211.28,239.55 L210.40,240.03 L209.49,240.49 L208.56,240.93" fill="none" stroke="#8a8a8a" stroke-width="1.8" stroke-linecap="round"/>
<path d="M240.59,209.72 L241.32,210.56 L242.00,211.43 L242.62,212.32 L243.19,213.22 L243.69,214.13 L244.14,215.06 L244.53,216.01 L244.86,216.96 L245.13,217.93 L245.34,218.91 L245.49,219.90 L245.58,220.89 L245.60,221.89 L245.57,222.90 L245.48,223.92 L245.32,224.93 L245.11,225.95 L244.84,226.97 L244.50,228.00 L244.11,229.02 L243.66,230.04 L243.15,231.05 L242.58,232.07 L241.95,233.07" fill="none" stroke="#606060" stroke-width="1.8" stroke-linecap="round"/>
<path d="M212.29,253.17 L210.59,253.74 L208.87,254.28 L207.13,254.79 L205.36,255.27 L203.58,255.72 L201.78,256.14 L199.97,256.54 L198.15,256.90 L196.32,257.23 L194.48,257.52 L192.63,257.79 L190.78,258.02 L188.93,258.22 L187.07,258.39 L185.22,258.52 L183.38,258.62 L181.54,258.69 L179.71,258.72 L177.88,258.72 L176.07,258.69 L174.28,258.62 L172.50,258.52 L170.74,258.39 L168.99,258.23" fill="none" stroke="#707070" stroke-width="1.8" stroke-linecap="round"/>
<path d="M148.49,252.99 L147.50,252.52 L146.53,252.04 L145.59,251.54 L144.68,251.03 L143.80,250.50 L142.95,249.95 L142.12,249.39 L141.33,248.82 L140.57,248.23 L139.84,247.63 L139.14,247.01 L138.48,246.39 L137.84,245.75 L137.24,245.10 L136.68,244.44 L136.14,243.76 L135.65,243.08 L135.18,242.38 L134.75,241.68 L134.36,240.97 L134.00,240.25 L133.68,239.52 L133.39,238.78 L133.14,238.04" fill="none" stroke="#555" stroke-width="1.5" stroke-linecap="round"/>
</g></g>
<polygon points="142,288 290,244 290,348 166,398" fill="#f0f000" stroke="#2a2a2a" stroke-width="0.7"/>
<line x1="172" y1="108" x2="189" y2="228" stroke="#2020a0" stroke-width="0.9"/>
<!-- cube 2 -->
<polygon points="320.5,189 403.4,255.5 387,360.5 318.3,287.3" fill="#000"/>
<polygon points="320.5,189 420.7,160.6 512.5,216 403.4,255.5" fill="#272727" stroke="#151515" stroke-width="0.9"/>
<g clip-path="url(#top2)"><g filter="url(#bl)">
<ellipse cx="412.5" cy="201.5" rx="60.8" ry="32.3" transform="rotate(-6 412.5 201.5)" fill="url(#fg2)"/>
<ellipse cx="412.5" cy="201.5" rx="54.15" ry="28.974999999999998" transform="rotate(-6 412.5 201.5)" fill="#303030" stroke="#3c3c3c" stroke-width="3"/>
<ellipse cx="412.5" cy="201.5" rx="44.65" ry="23.75" transform="rotate(-6 412.5 201.5)" fill="none" stroke="#272727" stroke-width="2.5"/>
<ellipse cx="412.5" cy="201.5" rx="33.25" ry="17.575" transform="rotate(-6 412.5 201.5)" fill="#2a2a2a" stroke="#4c4c4c" stroke-width="3"/>
<ellipse cx="412.5" cy="201.5" rx="28.5" ry="14.725" transform="rotate(-6 412.5 201.5)" fill="#222"/>
<ellipse cx="412.5" cy="201.5" rx="23.275" ry="11.589999999999998" transform="rotate(-6 412.5 201.5)" fill="#1c1c1c" stroke="#262626" stroke-width="1.5"/>
<path d="M379.40,203.44 L379.49,202.54 L379.68,201.63 L379.94,200.72 L380.29,199.82 L380.73,198.92 L381.25,198.02 L381.84,197.14 L382.52,196.26 L383.28,195.40 L384.11,194.56 L385.01,193.73 L385.99,192.93 L387.03,192.14 L388.14,191.38 L389.32,190.65 L390.55,189.95 L391.84,189.27 L393.18,188.63 L394.58,188.02 L396.02,187.44 L397.50,186.90 L399.02,186.40 L400.58,185.94 L402.17,185.52" fill="none" stroke="#b0b0b0" stroke-width="2" stroke-linecap="round"/>
<path d="M445.57,198.02 L445.61,198.66 L445.61,199.30 L445.57,199.95 L445.48,200.59 L445.36,201.24 L445.18,201.89 L444.97,202.54 L444.71,203.18 L444.40,203.83 L444.06,204.47 L443.67,205.10 L443.25,205.74 L442.78,206.36 L442.27,206.98 L441.72,207.60 L441.14,208.20 L440.51,208.80 L439.85,209.38 L439.16,209.96 L438.42,210.52 L437.66,211.08 L436.86,211.62 L436.03,212.14 L435.16,212.66" fill="none" stroke="#959595" stroke-width="1.8" stroke-linecap="round"/>
<path d="M462.09,186.49 L462.83,187.39 L463.50,188.32 L464.10,189.27 L464.64,190.23 L465.11,191.20 L465.50,192.19 L465.83,193.19 L466.09,194.20 L466.28,195.22 L466.39,196.25 L466.44,197.29 L466.41,198.33 L466.31,199.38 L466.14,200.43 L465.90,201.48 L465.59,202.53 L465.21,203.58 L464.76,204.62 L464.24,205.67 L463.65,206.70 L462.99,207.73 L462.27,208.76 L461.48,209.77 L460.63,210.77" fill="none" stroke="#8a8a8a" stroke-width="2" stroke-linecap="round"/>
<path d="M433.72,226.20 L431.90,226.73 L430.06,227.22 L428.19,227.69 L426.31,228.11 L424.40,228.51 L422.48,228.86 L420.55,229.18 L418.61,229.47 L416.65,229.71 L414.70,229.92 L412.73,230.10 L410.77,230.23 L408.82,230.33 L406.86,230.38 L404.92,230.40 L402.98,230.39 L401.06,230.33 L399.15,230.23 L397.26,230.10 L395.39,229.93 L393.54,229.72 L391.71,229.48 L389.92,229.20 L388.15,228.88" fill="none" stroke="#686868" stroke-width="1.6" stroke-linecap="round"/>
<path d="M373.16,224.06 L372.23,223.59 L371.33,223.11 L370.46,222.61 L369.61,222.10 L368.80,221.58 L368.01,221.04 L367.24,220.49 L366.51,219.93 L365.81,219.36 L365.14,218.78 L364.50,218.18 L363.89,217.58 L363.31,216.96 L362.76,216.33 L362.25,215.70 L361.76,215.05 L361.31,214.40 L360.90,213.73 L360.52,213.06 L360.17,212.39 L359.85,211.70 L359.57,211.01 L359.32,210.31 L359.11,209.61" fill="none" stroke="#505050" stroke-width="1.4" stroke-linecap="round"/>
</g></g>
<polygon points="403.4,255.5 512.5,216 485,317.5 387,360.5" fill="#f0f000" stroke="#2a2a2a" stroke-width="0.7"/>
</svg>
</div>
<div class="a" style="left:535px;top:107px;width:214px;height:345px;background:#f0f0f0"></div>
<div class="a" style="left:535px;top:107px;width:214px;height:16px;background:linear-gradient(#d3dee9,#dde6ef)"></div>
<div class="t" style="left:538.5px;top:111px;font-size:10px;color:#111;transform-origin:0 0;transform:scaleX(0.967)">Standard-Ablage</div>
<svg width="10" height="10" style="left:720px;top:111px"><path d="M3,1 V5.5 M7,1 V5.5 M2.5,1 H7.5 M1.5,6 H8.5 M5,6 V9" stroke="#111" stroke-width="1.3" fill="none"/></svg>
<div class="a" style="left:736px;top:110px;width:10px;height:10px;background:#d03a3a"></div>
<svg width="10" height="10" style="left:736px;top:110px"><path d="M3,3 L7,7 M7,3 L3,7" stroke="#fff" stroke-width="1.1"/></svg>
<div class="a" style="left:536px;top:123px;width:199px;height:14px;background:linear-gradient(#f6f6f6,#d4d4d4)"></div>
<svg width="8" height="6" style="left:542px;top:127px"><path d="M0.5,0.5 H6.5 L3.5,5.5 Z" fill="#111"/></svg>
<div class="t" style="left:553.5px;top:125px;font-size:10px;color:#111;transform-origin:0 0;transform:scaleX(1.0)">Materialien</div>
<div class="a" style="left:721px;top:124px;width:12px;height:13px;background:#ececec;border:1px solid #b0b0b0"></div>
<svg width="12" height="13" style="left:721px;top:124px"><path d="M3.5,4.5 L8,9 M8,4.5 L3.5,9" stroke="#222" stroke-width="1.3"/></svg>
<div class="a" style="left:735px;top:123px;width:14px;height:329px;background:#f0f0f0;border-left:1px solid #e0e0e0"></div>
<svg width="12" height="8" style="left:736px;top:128px"><path d="M2,6 L6,2 L10,6" stroke="#333" stroke-width="1.6" fill="none"/></svg>
<div class="a" style="left:736px;top:138px;width:11px;height:14px;background:#cdcdcd"></div>
<svg width="12" height="8" style="left:736px;top:442px"><path d="M2,2 L6,6 L10,2" stroke="#333" stroke-width="1.6" fill="none"/></svg>
<div class="a" style="left:537px;top:139px;width:56px;height:61px;background:#fff;border:1px solid #c8c8c8"></div>
<svg width="54" height="54" style="left:538px;top:142px" viewBox="0 0 54 54">
<defs><radialGradient id="tgp" cx="0.5" cy="0.5" r="0.5">
<stop offset="0" stop-color="#404040"/><stop offset="0.15" stop-color="#333"/><stop offset="0.3" stop-color="#161616"/><stop offset="0.5" stop-color="#1a1a1a"/><stop offset="0.58" stop-color="#3a3a3a"/><stop offset="0.68" stop-color="#505050"/><stop offset="0.76" stop-color="#2a2a2a"/><stop offset="0.86" stop-color="#242424"/><stop offset="0.94" stop-color="#3a3a3a"/><stop offset="1" stop-color="#2c2c2c"/>
</radialGradient><filter id="tbp"><feGaussianBlur stdDeviation="0.7"/></filter></defs>
<rect width="54" height="54" fill="#2c2c2c"/>
<circle cx="27" cy="26.5" r="22" fill="url(#tgp)"/>
<g filter="url(#tbp)">
<path d="M12.5,22 A15.5,15.5 0 0 1 27,11" stroke="#a0a0a0" stroke-width="2" fill="none"/>
<path d="M15,37 A15.5,15.5 0 0 0 39,37" stroke="#a0a0a0" stroke-width="2.2" fill="none"/>
<path d="M7,35 A21,21 0 0 0 20,46" stroke="#606060" stroke-width="1.5" fill="none"/>
</g>
</svg>
<svg width="9" height="9" style="left:583.5px;top:186.5px"><path d="M1,8 L8,8 L8,1 Z" fill="#fff"/></svg>
<div class="a" style="left:595px;top:139px;width:116px;height:17px;background:#fff;border-top:2px solid #a8a8a8;border-left:2px solid #a8a8a8;border-bottom:1px solid #e4e4e4;border-right:1px solid #e4e4e4"></div>
<div class="t" style="left:599.5px;top:142.7px;font-size:11px;color:#111;transform-origin:0 0;transform:scaleX(0.887)">Textur1</div>
<svg width="12" height="14" style="left:718px;top:141px"><rect x="1" y="0.5" width="9.5" height="12.5" fill="#111"/><path d="M2.5,2 H9 L5.75,5.5 Z" fill="#fff"/><rect x="1" y="6" width="9.5" height="1" fill="#f0f0f0"/><circle cx="5.75" cy="9.5" r="1.5" fill="#bbb"/></svg>
<svg width="18" height="16" style="left:714px;top:161px"><path d="M4,4 L11,1 L17,3 L17,9 L10,13 L4,10 Z" fill="#2a2a2a" stroke="#111" stroke-width="0.8"/><path d="M6,5 L12,2.5 M6,7 L12,4.5" stroke="#e8d890" stroke-width="1.3"/><circle cx="6" cy="11" r="4.3" fill="#fff" stroke="#111" stroke-width="1.2"/><path d="M6,8.5 V13.5 M3.5,11 H8.5" stroke="#111" stroke-width="1.3"/></svg>
<div class="a" style="left:713.5px;top:179.5px;width:20px;height:20px;background:#fafafa"></div>
<svg width="20" height="20" style="left:713.5px;top:179.5px"><path d="M0,0.5 L19.5,19.5 L0,19.5 Z" fill="#a7b3bb"/></svg>
<div class="a" style="left:536px;top:201px;width:199px;height:1px;background:#a8a8a8"></div>
<div class="a" style="left:591px;top:207px;width:52px;height:16px;background:#f4f4f4"></div>
<div class="a" style="left:590px;top:207px;width:2px;height:16px;background:linear-gradient(90deg,#fff 0 1px,#808080 1px)"></div>
<div class="a" style="left:642px;top:208px;width:2px;height:14px;background:linear-gradient(90deg,#808080 0 1px,#fff 1px)"></div>
<div class="a" style="left:536px;top:224px;width:199px;height:1px;background:#e2e2e2"></div>
<div class="t" style="left:540.8px;top:211px;font-size:9px;color:#111;transform-origin:0 0;transform:scaleX(0.981)">Auswählen</div>
<div class="t" style="left:594.6px;top:212.5px;font-size:9px;color:#222;transform-origin:0 0;transform:scaleX(0.992)">Bearbeiten</div>
<svg width="17" height="17" style="left:716px;top:204px"><path d="M1.8,14.2 L10,6" stroke="#222" stroke-width="2.6" stroke-linecap="round"/><path d="M2.3,13.7 L9.5,6.5" stroke="#d8c870" stroke-width="1.1"/><path d="M10,6 L13.8,2.2" stroke="#2a2a2a" stroke-width="3.6" stroke-linecap="round"/><path d="M8.3,4.8 L11.5,8" stroke="#222" stroke-width="1.3"/></svg>
<svg width="13" height="13" style="left:541px;top:230px"><path d="M1,5.5 L6,1 L6,3.5 L11.5,3.5 L11.5,8 L6,8 L6,11 Z" fill="#fff" stroke="#111" stroke-width="1.4" stroke-linejoin="miter"/></svg>
<svg width="13" height="13" style="left:561px;top:230px"><path d="M11.5,5.5 L6.5,1 L6.5,3.5 L1,3.5 L1,8 L6.5,8 L6.5,11 Z" fill="#fff" stroke="#a0a0a0" stroke-width="1.2"/></svg>
<svg width="16" height="15" style="left:580px;top:229.5px"><path d="M7.5,1 L0.5,7.5 L2.5,7.5 L2.5,14 L12.5,14 L12.5,7.5 L14.5,7.5 Z" fill="#111"/><path d="M7.5,3.5 L4,7 L4,12.5 L11,12.5 L11,7 Z" fill="#fff"/><rect x="6" y="9" width="3.5" height="4" fill="#111"/><rect x="10" y="1.5" width="2" height="3.5" fill="#111"/></svg>
<div class="a" style="left:598.5px;top:229.5px;width:113px;height:18.5px;background:#fff;border-top:2px solid #8c8c8c;border-left:2px solid #8c8c8c;border-right:1px solid #6a6a6a;border-bottom:2px solid #6a6a6a"></div>
<div class="a" style="left:697px;top:231.5px;width:13px;height:14.5px;background:#f0f0f0;border-left:1px solid #d8d8d8"></div>
<svg width="8" height="5" style="left:700.5px;top:237.5px"><path d="M0.5,0.5 H7 L3.75,4 Z" fill="#111"/></svg>
<div class="t" style="left:602.5px;top:234.8px;font-size:10px;color:#111;transform-origin:0 0;transform:scaleX(0.865)">Im Modell</div>
<svg width="14" height="14" style="left:718px;top:229.5px"><path d="M7,1 L13,6.5 L7,12 Z" fill="#111"/><rect x="1" y="2" width="7" height="10" rx="1" fill="#3a6fb0" stroke="#111" stroke-width="1"/><rect x="2.5" y="3.5" width="4" height="3" fill="#cfe0f0"/><rect x="3" y="8" width="3" height="3" fill="#aaa"/></svg>
<div class="a" style="left:535px;top:249.5px;width:200px;height:203px;background:#fff;border-top:1px solid #c8c8c8"></div>
<div class="a" style="left:538.3px;top:251.1px;width:41.5px;height:42px;background:#eaeaf0;border:1px solid #c4c4cc"></div><div class="a" style="left:539.9px;top:253.0px;width:38.3px;height:38.5px;background:#0000ff"></div>
<svg width="9" height="9" style="left:569.3px;top:282.1px"><path d="M1,8 L8,8 L8,1 Z" fill="#fff"/></svg>
<div class="a" style="left:582.5px;top:251.1px;width:41.5px;height:42px;background:#eaeaf0;border:1px solid #c4c4cc"></div><div class="a" style="left:584.1px;top:253.0px;width:38.3px;height:38.5px;background:#ffff00"></div>
<svg width="9" height="9" style="left:613.5px;top:282.1px"><path d="M1,8 L8,8 L8,1 Z" fill="#ffff00" stroke="#b8b8a0" stroke-width="0.8"/></svg>
<div class="a" style="left:626.7px;top:251.1px;width:41.5px;height:42px;background:#eaeaf0;border:1px solid #c4c4cc"></div><div class="a" style="left:628.3000000000001px;top:253.0px;width:38.3px;height:38.5px;background:#ff0000"></div>
<svg width="9" height="9" style="left:657.7px;top:282.1px"><path d="M1,8 L8,8 L8,1 Z" fill="#fff"/></svg>
<div class="a" style="left:670.9px;top:251.1px;width:41.5px;height:42px;background:#eaeaf0;border:1px solid #c4c4cc"></div><div class="a" style="left:672.5px;top:253.0px;width:38.3px;height:38.5px;background:#000000"></div>
<svg width="9" height="9" style="left:701.9px;top:282.1px"><path d="M1,8 L8,8 L8,1 Z" fill="#fff"/></svg>
<div class="a" style="left:538.3px;top:295.3px;width:41.5px;height:42px;background:#eaeaf0;border:1px solid #c4c4cc"></div><svg width="38.3" height="38.5" style="left:539.9px;top:297.2px" viewBox="0 0 54 54">
<defs><radialGradient id="tgs1" cx="0.5" cy="0.5" r="0.5">
<stop offset="0" stop-color="#404040"/><stop offset="0.15" stop-color="#333"/><stop offset="0.3" stop-color="#161616"/><stop offset="0.5" stop-color="#1a1a1a"/><stop offset="0.58" stop-color="#3a3a3a"/><stop offset="0.68" stop-color="#505050"/><stop offset="0.76" stop-color="#2a2a2a"/><stop offset="0.86" stop-color="#242424"/><stop offset="0.94" stop-color="#3a3a3a"/><stop offset="1" stop-color="#2c2c2c"/>
</radialGradient><filter id="tbs1"><feGaussianBlur stdDeviation="0.7"/></filter></defs>
<rect width="54" height="54" fill="#2c2c2c"/>
<circle cx="27" cy="26.5" r="22" fill="url(#tgs1)"/>
<g filter="url(#tbs1)">
<path d="M12.5,22 A15.5,15.5 0 0 1 27,11" stroke="#a0a0a0" stroke-width="2" fill="none"/>
<path d="M15,37 A15.5,15.5 0 0 0 39,37" stroke="#a0a0a0" stroke-width="2.2" fill="none"/>
<path d="M7,35 A21,21 0 0 0 20,46" stroke="#606060" stroke-width="1.5" fill="none"/>
</g>
</svg>
<svg width="9" height="9" style="left:569.3px;top:326.3px"><path d="M1,8 L8,8 L8,1 Z" fill="#fff"/></svg>
<div class="a" style="left:580.5px;top:293.8px;width:45.5px;height:45px;border:2px solid #2677b8;background:#fff"></div>
<svg width="40" height="40.5" style="left:582.7px;top:295.8px" viewBox="0 0 54 54">
<defs><radialGradient id="tgs2" cx="0.5" cy="0.5" r="0.5">
<stop offset="0" stop-color="#404040"/><stop offset="0.15" stop-color="#333"/><stop offset="0.3" stop-color="#161616"/><stop offset="0.5" stop-color="#1a1a1a"/><stop offset="0.58" stop-color="#3a3a3a"/><stop offset="0.68" stop-color="#505050"/><stop offset="0.76" stop-color="#2a2a2a"/><stop offset="0.86" stop-color="#242424"/><stop offset="0.94" stop-color="#3a3a3a"/><stop offset="1" stop-color="#2c2c2c"/>
</radialGradient><filter id="tbs2"><feGaussianBlur stdDeviation="0.7"/></filter></defs>
<rect width="54" height="54" fill="#2c2c2c"/>
<circle cx="27" cy="26.5" r="22" fill="url(#tgs2)"/>
<g filter="url(#tbs2)">
<path d="M12.5,22 A15.5,15.5 0 0 1 27,11" stroke="#a0a0a0" stroke-width="2" fill="none"/>
<path d="M15,37 A15.5,15.5 0 0 0 39,37" stroke="#a0a0a0" stroke-width="2.2" fill="none"/>
<path d="M7,35 A21,21 0 0 0 20,46" stroke="#606060" stroke-width="1.5" fill="none"/>
</g>
</svg>
<svg width="9" height="9" style="left:613.5px;top:326.3px"><path d="M1,8 L8,8 L8,1 Z" fill="#fff"/></svg>
<div class="a" style="left:626.7px;top:295.3px;width:41.5px;height:42px;background:#eaeaf0;border:1px solid #c4c4cc"></div><div class="a" style="left:627.7px;top:296.3px;width:39.5px;height:40px;background:#fff"></div>
<svg width="9" height="9" style="left:657.7px;top:326.3px"><path d="M1,8 L8,8 L8,1 Z" fill="#fff" stroke="#b0b0b0" stroke-width="0.8"/></svg>
<div class="a" style="left:582.5px;top:337.5px;width:35.5px;height:13.5px;background:#fdfde8;border:1px solid #8a8a80"></div>
<div class="t" style="left:585.2px;top:339.6px;font-size:10px;color:#111;transform-origin:0 0;transform:scaleX(0.875)">Textur1</div>
<!-- status bar -->
<div class="a" style="left:0;top:452px;width:750px;height:24px;background:#f0f0f0"></div>
<svg width="80" height="20" style="left:0;top:456px">
<g fill="none" stroke="#aaa" stroke-width="1.2"><circle cx="12" cy="9" r="5.5"/><circle cx="37" cy="9" r="5.5"/><circle cx="62" cy="9" r="5.5"/></g>
<path d="M10.5,6 h3 l-0.5,4 l-1,3 l-1,-3 z" fill="#aaa"/>
<circle cx="37" cy="6" r="1" fill="#aaa"/><rect x="36" y="8" width="2" height="5" fill="#aaa"/>
<circle cx="62" cy="7" r="2.2" fill="#aaa"/><path d="M58,13 C59,10 65,10 66,13 Z" fill="#aaa"/>
</svg>
<div class="a" style="left:79px;top:460px;width:1px;height:10px;background:#a8a8a8"></div>
<div class="t" style="left:88px;top:460px;font-size:11px;color:#000;transform-origin:0 0;transform:scaleX(1.01)">Objekt zur farblichen Bearbeitung auswählen. Alt = Materialprobe.</div>
<div class="a" style="left:480px;top:460px;width:1px;height:10px;background:#a8a8a8"></div>
<div class="t" style="left:489.5px;top:460px;font-size:11px;color:#000;transform-origin:0 0;transform:scaleX(0.972)">Maßangaben</div>
<div class="a" style="left:561px;top:455px;width:169px;height:20px;background:#f0f0f0;border:1px solid #b8c4d0"></div>
<svg width="10" height="10" style="left:739px;top:465px"><g fill="#b8b8b8"><rect x="7" y="1" width="1.5" height="1.5"/><rect x="4" y="4" width="1.5" height="1.5"/><rect x="7" y="4" width="1.5" height="1.5"/><rect x="1" y="7" width="1.5" height="1.5"/><rect x="4" y="7" width="1.5" height="1.5"/><rect x="7" y="7" width="1.5" height="1.5"/></g></svg>
<!-- borders -->
<div class="a" style="left:0;top:0;width:750px;height:1px;background:#5a5a5a"></div>
<div class="a" style="left:0;top:0;width:1px;height:477px;background:#6a6a6a"></div>
<div class="a" style="left:749px;top:0;width:1px;height:477px;background:#6a6a6a"></div>
<div class="a" style="left:0;top:476px;width:750px;height:1px;background:#303030"></div>
</body></html>
